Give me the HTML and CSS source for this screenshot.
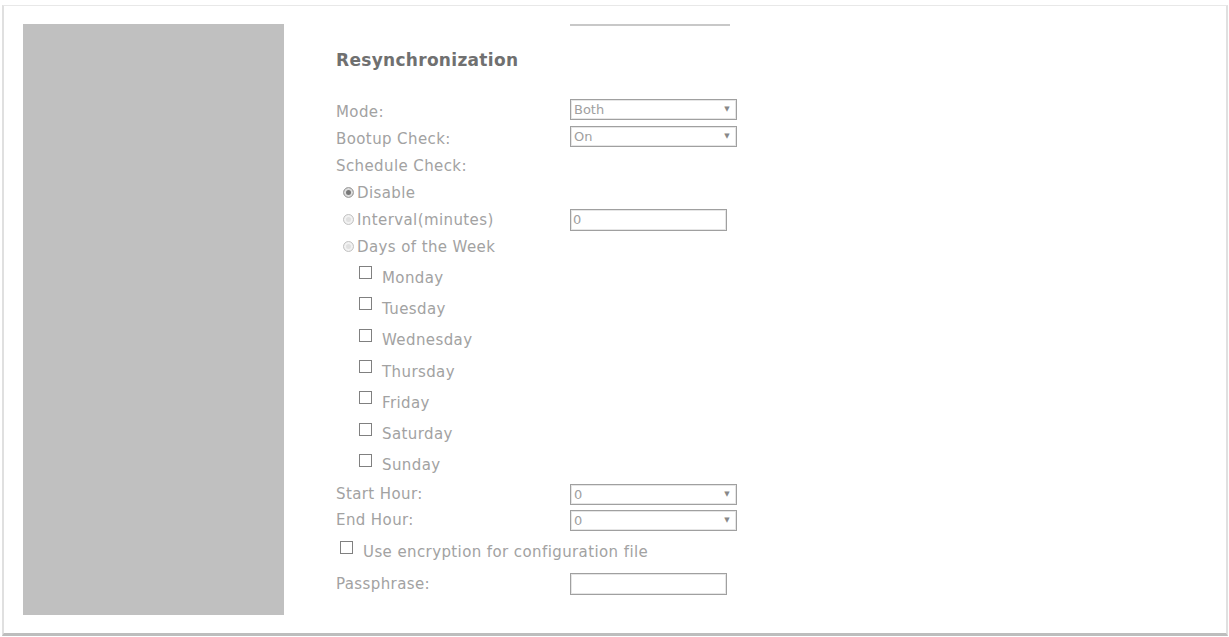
FILE: index.html
```html
<!doctype html>
<html lang="en">

<head>
  <meta charset="UTF-8">
  <title>Resynchronization</title>
  <link rel="stylesheet" href="styles.css">
</head>

<body>

  <div class="frame">
    <div class="side"></div>

    <form class="settings">
      <div class="cut-field"></div>

      <h2 class="title">Resynchronization</h2>

      <div class="row">
        <label class="label">Mode:</label>
        <span class="select raised">
          <select><option>Both</option><option>Client</option><option>Server</option></select>
        </span>
      </div>
      <div class="row">
        <label class="label">Bootup Check:</label>
        <span class="select raised">
          <select><option>On</option><option>Off</option></select>
        </span>
      </div>
      <div class="row">
        <label class="label">Schedule Check:</label>
      </div>
      <div class="row radio-row">
        <input type="radio" name="sched" class="radio" checked>
        <span>Disable</span>
      </div>
      <div class="row radio-row">
        <input type="radio" name="sched" class="radio">
        <span class="radio-text">Interval(minutes)</span>
        <input type="text" class="field" value="0">
      </div>
      <div class="row radio-row">
        <input type="radio" name="sched" class="radio">
        <span>Days of the Week</span>
      </div>

      <ul class="days">
        <li><input type="checkbox" class="check"><span>Monday</span></li>
        <li><input type="checkbox" class="check"><span>Tuesday</span></li>
        <li><input type="checkbox" class="check"><span>Wednesday</span></li>
        <li><input type="checkbox" class="check"><span>Thursday</span></li>
        <li><input type="checkbox" class="check"><span>Friday</span></li>
        <li><input type="checkbox" class="check"><span>Saturday</span></li>
        <li><input type="checkbox" class="check"><span>Sunday</span></li>
      </ul>

      <div class="row short">
        <label class="label">Start Hour:</label>
        <span class="select">
          <select><option>0</option><option>1</option><option>2</option></select>
        </span>
      </div>
      <div class="row short">
        <label class="label">End Hour:</label>
        <span class="select">
          <select><option>0</option><option>1</option><option>2</option></select>
        </span>
      </div>
      <div class="row crypt">
        <input type="checkbox" class="check">
        <span>Use encryption for configuration file</span>
      </div>
      <div class="row short">
        <label class="label">Passphrase:</label>
        <input type="password" class="field">
      </div>
    </form>
  </div>

</body>

</html>
```

FILE: styles.css
```css
* {
  margin: 0px;
  padding: 0px;
  box-sizing: border-box;
}

body {
  background: #fff;
  font-family: "DejaVu Sans", Verdana, sans-serif;
  font-size: 15px;
  letter-spacing: 0.4px;
  color: #a2a2a2;
}

.frame {
  display: flex;
  align-items: flex-start;
  margin: 5px 1px 0 2px;
  height: 631px;
  border-top: 1px solid #e8e8e8;
  border-left: 2px solid #e0e0e0;
  border-right: 2px solid #e0e0e0;
  border-bottom: 3px solid #bdbdbd;
}

/* grey column on the left */
.side {
  flex: none;
  width: 261px;
  height: 591px;
  margin: 18px 0 0 19px;
  background: #c0c0c0;
}

.settings {
  margin-left: 52px;
}

/* bottom edge of the field above, scrolled out of view */
.cut-field {
  width: 160px;
  height: 20px;
  margin-left: 234px;
  border-bottom: 2px solid #c8c8c8;
}

.title {
  margin: 24px 0 28px;
  font-size: 17px;
  line-height: 20px;
  letter-spacing: 0.3px;
  color: #707070;
}

.row {
  display: flex;
  align-items: center;
  height: 27px;
}

.row.short {
  height: 26px;
}

.label {
  width: 234px;
}

.select {
  position: relative;
  display: block;
  width: 167px;
  height: 21px;
  border: 1px solid #a0a0a0;
  box-shadow: inset 0 0 0 1px #e6e6e6;
}

.select.raised {
  margin-bottom: 4px;
}

.select select {
  appearance: none;
  width: 100%;
  height: 100%;
  border: none;
  background: transparent;
  padding: 0 3px;
  font-family: "DejaVu Sans", Verdana, sans-serif;
  font-size: 13px;
  color: #a0a0a0;
  outline: none;
}

.select::after {
  content: "\25BC";
  position: absolute;
  right: 6px;
  top: 5px;
  font-size: 7px;
  color: #888;
  pointer-events: none;
}

.field {
  width: 157px;
  height: 22px;
  border: 1px solid #a0a0a0;
  box-shadow: inset 0 0 0 1px #e6e6e6;
  padding: 0 2px;
  font-family: "DejaVu Sans", Verdana, sans-serif;
  font-size: 13px;
  color: #a0a0a0;
  outline: none;
}

/* radio buttons of the schedule block */
.radio-row {
  padding-left: 7px;
}

.radio {
  appearance: none;
  flex: none;
  width: 11px;
  height: 11px;
  margin-right: 3px;
  border: 1px solid #c4c4c4;
  border-radius: 50%;
  background: #e0e0e0;
  box-shadow: inset 0 0 0 2px #f2f2f2;
}

.radio:checked {
  border-color: #aaa;
  background: #777;
  box-shadow: inset 0 0 0 2px #ddd;
}

.radio-text {
  width: 213px;
}

.check {
  appearance: none;
  flex: none;
  width: 13px;
  height: 13px;
  margin-bottom: 10px;
  border: 1px solid #808080;
  background: #fff;
}

.days {
  list-style: none;
  margin-top: 2px;
}

.days li {
  display: flex;
  align-items: center;
  gap: 10px;
  height: 31.3px;
  padding-left: 23px;
}

.row.crypt {
  height: 38px;
  gap: 10px;
  padding-left: 4px;
}
```
